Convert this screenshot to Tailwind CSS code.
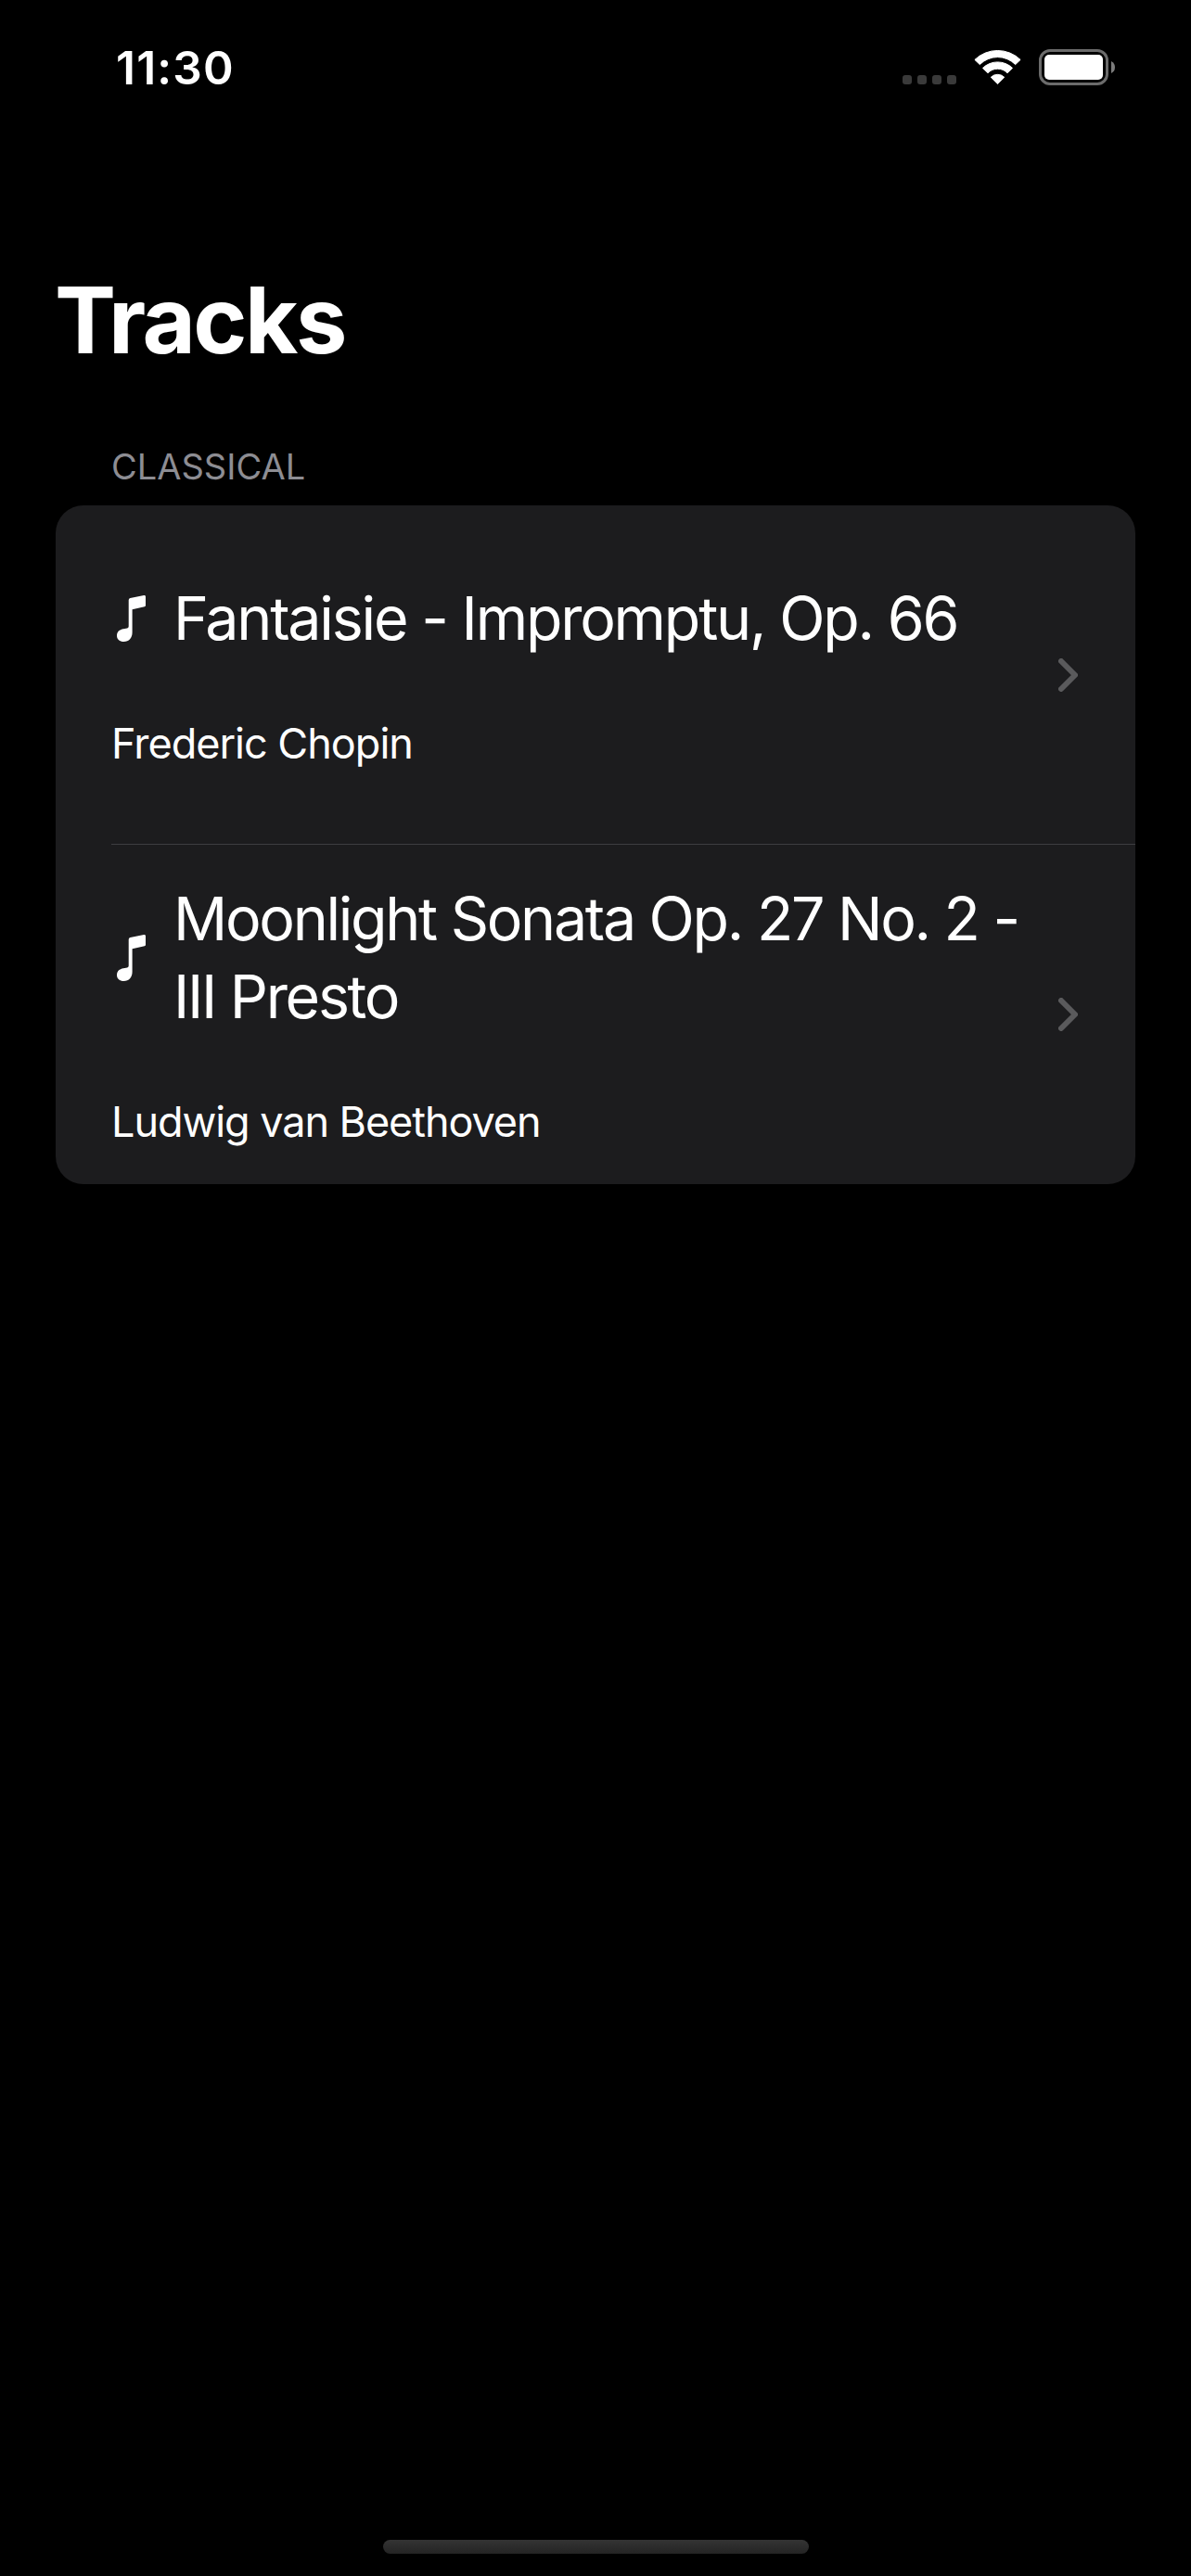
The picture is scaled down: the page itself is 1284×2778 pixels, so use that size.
<!DOCTYPE html>
<html lang="en">
<head>
<meta charset="utf-8">
<title>Tracks</title>
<script src="https://cdn.jsdelivr.net/npm/@tailwindcss/browser@4"></script>
</head>
<body class="bg-black">
<div class="flex h-[2778px] w-[1284px] flex-col overflow-hidden bg-black font-['Inter',sans-serif] text-white">
  <header class="flex h-[145px] items-start justify-between pt-[43px] pr-[82px] pl-[125px]">
    <div class="text-[49.5px] leading-[60px] font-semibold tracking-[1.2px]">11:30</div>
    <div class="flex pt-2.5">
      <div class="flex gap-1.5 pt-7">
        <span class="size-2.5 rounded-[3px] bg-[#3a3a3a]"></span>
        <span class="size-2.5 rounded-[3px] bg-[#3a3a3a]"></span>
        <span class="size-2.5 rounded-[3px] bg-[#3a3a3a]"></span>
        <span class="size-2.5 rounded-[3px] bg-[#3a3a3a]"></span>
      </div>
      <svg class="mt-px ml-[19px] h-[38px] w-[51px]" viewBox="0 0 51 38" fill="#fff" stroke="#fff" stroke-width="1" stroke-linejoin="round">
        <path d="M.9 10.4A35.5 35.5 0 0 1 50.1 10.4L44.7 15.6A27 27 0 0 0 6.3 15.6Z"/>
        <path d="M9.5 19.4A23 23 0 0 1 41.5 19.4L36 24.7A14.5 14.5 0 0 0 15 24.7Z"/>
        <path d="M18.3 29.2A10.5 10.5 0 0 1 32.7 29.2L25.5 36.5Z"/>
      </svg>
      <div class="ml-[19px] h-[39px] w-[75px] rounded-[12px] border-3 border-[#6b6b6b] p-[3px]">
        <div class="h-full rounded-[5px] bg-white"></div>
      </div>
      <svg class="mt-[13px] ml-[3px] h-[13px] w-1" viewBox="0 0 4 13" fill="#7c7c7c"><path d="M0 0Q4 2 4 6.5T0 13Z"/></svg>
    </div>
  </header>

  <main class="flex flex-1 flex-col px-[60px] pt-[140px]">
    <h1 class="-ml-px text-[99px] leading-[120px] font-bold tracking-[-2.52px]">Tracks</h1>
    <h2 class="mt-[73px] mb-[17px] pl-[60px] text-[38px] leading-[50px] text-[#8d8d93]">CLASSICAL</h2>
    <ul class="flex h-[732px] flex-col overflow-hidden rounded-[30px] bg-[#1c1c1e]">
      <li class="flex h-[366px] pl-[60px]">
        <div class="flex flex-1 items-center border-b border-[#3d3d41]">
          <div class="flex flex-1 flex-col gap-[63px] pt-px">
            <div class="flex items-center">
              <svg class="mr-[30px] ml-1.5 h-[50px] w-[31px] shrink-0" viewBox="0 0 31 50" fill="#fff"><path d="M12.7 5Q12.7 3.3 14.4 2.9L29.2 0Q31 -.2 31 1.4V11Q31 12 29.8 12.3L16.6 15.2V40C16.6 46 13 50 7.5 50C3 50 0 47.300 0 43.400C0 39.300 2.800 37 7 36.200L11.200 35.400Q12.700 35.100 12.700 33.600Z"/></svg>
              <span class="whitespace-nowrap text-[64.5px] leading-[84px] tracking-[-2.23px]">Fantaisie - Impromptu, Op. 66</span>
            </div>
            <div class="text-[45px] leading-[60px] tracking-[-1px]">Frederic Chopin</div>
          </div>
          <svg class="mr-[62px] h-9 w-[21px] shrink-0" viewBox="0 0 21 36" fill="none" stroke="#5a5a5c" stroke-width="6" stroke-linecap="round" stroke-linejoin="round"><path d="M3 3L18 18L3 33"/></svg>
        </div>
      </li>
      <li class="flex h-[366px] pl-[60px]">
        <div class="flex flex-1 items-center">
          <div class="flex flex-1 flex-col gap-[63px]">
            <div class="flex items-center">
              <svg class="mr-[30px] ml-1.5 h-[50px] w-[31px] shrink-0" viewBox="0 0 31 50" fill="#fff"><path d="M12.7 5Q12.7 3.3 14.4 2.9L29.2 0Q31 -.2 31 1.4V11Q31 12 29.8 12.3L16.6 15.2V40C16.6 46 13 50 7.5 50C3 50 0 47.300 0 43.400C0 39.300 2.800 37 7 36.200L11.200 35.400Q12.700 35.100 12.700 33.600Z"/></svg>
              <span class="whitespace-nowrap text-[64.5px] leading-[84px] tracking-[-2.32px]">Moonlight Sonata Op. 27 No. 2 -<br>III Presto</span>
            </div>
            <div class="text-[45px] leading-[60px] tracking-[-1.06px]">Ludwig van Beethoven</div>
          </div>
          <svg class="mr-[62px] h-9 w-[21px] shrink-0" viewBox="0 0 21 36" fill="none" stroke="#5a5a5c" stroke-width="6" stroke-linecap="round" stroke-linejoin="round"><path d="M3 3L18 18L3 33"/></svg>
        </div>
      </li>
    </ul>
  </main>

  <footer class="pb-6 pl-[413px]">
    <div class="h-[15px] w-[459px] rounded-full bg-linear-to-b from-[#343434] to-[#242424]"></div>
  </footer>
</div>
</body>
</html>
